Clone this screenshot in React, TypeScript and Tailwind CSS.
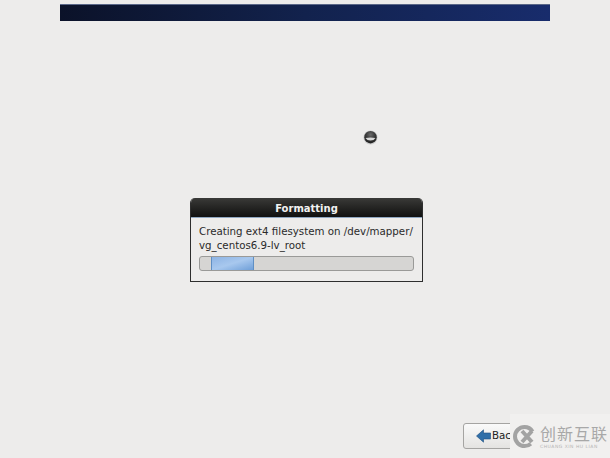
export default function App() {
  return (
    <div className="relative h-[458px] w-[610px] overflow-hidden bg-[#edeceb] font-['DejaVu_Sans',sans-serif]">
      {/* Header banner */}
      <div className="px-[60px] pt-[4px]">
        <div className="h-[17px] w-[490px] border-t border-[#5a6788] bg-gradient-to-r from-[#0b1229] via-[#12224d] to-[#182c6c]"></div>
      </div>

      {/* Busy spinner */}
      <div className="flex justify-end pr-[232px] pt-[109px]">
        <svg width="15" height="15" viewBox="0 0 15 15">
          <defs>
            <radialGradient id="ball" cx="50%" cy="30%" r="65%">
              <stop offset="0%" stopColor="#6c6c6c" />
              <stop offset="55%" stopColor="#3a3a3a" />
              <stop offset="100%" stopColor="#222222" />
            </radialGradient>
          </defs>
          <circle cx="7.5" cy="7.5" r="7" fill="#c9c9c9" />
          <circle cx="7.5" cy="7.2" r="6.2" fill="url(#ball)" />
          <path d="M2.5 8 Q7.5 6.8 12.5 8 Q11 10.5 7.5 10.6 Q4 10.5 2.5 8Z" fill="#d8d8d8" />
        </svg>
      </div>

      {/* Formatting dialog */}
      <div className="pt-[53px] pl-[190px]">
        <div className="w-[233px] overflow-hidden rounded-t-[5px] border-x border-b border-[#2e2e2e] bg-[#edeceb]">
          <div className="flex h-[20px] items-center justify-center border-b border-[#8fa6c0] bg-gradient-to-b from-[#3a3a38] to-[#111110] pt-[1px] text-[10px] font-bold text-[#f2f2f2]">
            Formatting
          </div>
          <div className="px-[8px] pt-[6px] pb-[10px]">
            <p className="text-[10.25px] leading-[14px] whitespace-nowrap text-[#2a2a2a]">
              Creating ext4 filesystem on /dev/mapper/
              <br />
              vg_centos6.9-lv_root
            </p>
            <div className="mt-[4px] h-[15px] w-[215px] overflow-hidden rounded-[3px] border border-[#9a9a98] bg-[#d6d5d3] pl-[11px]">
              <div className="h-full w-[43px] border-x border-[#5f8fc4] bg-gradient-to-br from-[#8db4e4] via-[#a8c8ee] to-[#6f9fd8]"></div>
            </div>
          </div>
        </div>
      </div>

      {/* Back button */}
      <div className="pl-[463px] pt-[141px]">
        <button className="flex h-[26px] w-[80px] items-center gap-[1px] rounded-[3px] border border-[#a5a4a2] bg-gradient-to-b from-[#fafafa] to-[#e4e3e1] pl-[12px] text-[10.25px] text-[#222]">
          <svg width="15" height="14" viewBox="0 0 15 14">
            <path d="M0.5 7 L7.5 0.8 V4 H14.5 V10 H7.5 V13.2Z" fill="#2f6ea8" stroke="#1f4f80" strokeWidth="0.6" />
          </svg>
          Back
        </button>
      </div>

      {/* Watermark */}
      <div className="absolute right-0 bottom-0 flex h-[44px] w-[100px] items-center gap-[3px] bg-[#f1f0ef] pl-[2px]">
        <svg width="25" height="25" viewBox="0 0 25 25" className="shrink-0">
          <circle cx="12.5" cy="12.5" r="9.5" fill="none" stroke="#a3a3a3" strokeWidth="4" strokeDasharray="46 14" strokeDashoffset="-8" />
          <path d="M10 7 L20 18 M20 7 L10 18" stroke="#a3a3a3" strokeWidth="4" />
        </svg>
        <div className="flex flex-col items-start gap-[2px]">
          <span className="block font-['Noto_Sans_CJK_SC',sans-serif] text-[16px] leading-[18px] tracking-[1px] whitespace-nowrap text-[#a8a8a8]">创新互联</span>
          <span className="block text-[4.5px] leading-[5px] tracking-[0.5px] whitespace-nowrap text-[#b5b5b5]">CHUANG XIN HU LIAN</span>
        </div>
      </div>
    </div>
  );
}
